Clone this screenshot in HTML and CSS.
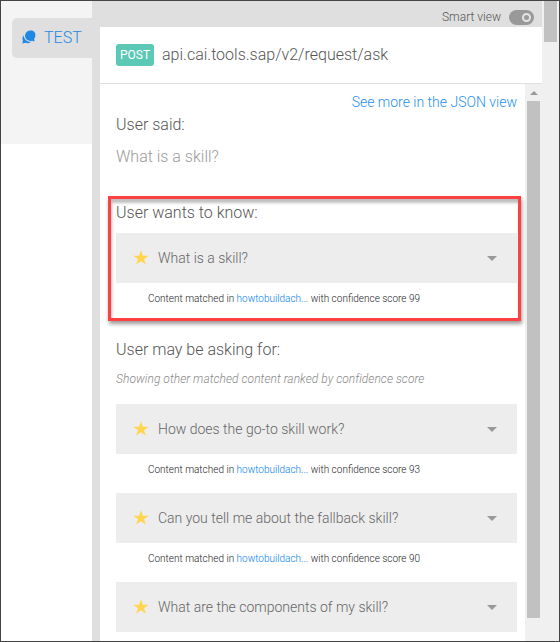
FILE: index.html
```html
<!DOCTYPE html>
<html lang="en">
<head>
<meta charset="utf-8">
<title>Test console</title>
<link rel="stylesheet" href="styles.css">
</head>
<body>
<svg class="defs" width="0" height="0" aria-hidden="true">
  <symbol id="star" viewBox="0 0 16 16"><path d="M8 .3l1.900 5.500h5.700L11 9.200l1.900 5.300L8 11.300l-4.900 3.200L5 9.200.4 5.800h5.700z" fill="#ffd54f"/></symbol>
</svg>
<div class="app">
  <aside class="side">
    <div class="side-bg">
      <div class="tab">
        <svg class="chat" viewBox="0 0 14 14"><path d="M8 .4h2l2 1.200 1.300 2v3.200l-1.100 2 .3 2.800-2.500-.8c-3 1.200-6.400-.8-6.900-4C2.700 3.400 5 .6 8 .4z" fill="#1e88e5"/><path d="M1.600 5.200C.4 7 .2 9 .9 10.400L.4 13.400l3-.7c2.300.8 4.500.5 6-.9-3.700.3-7.300-2-7.800-6.600z" fill="#1e88e5"/><path d="M2.300 5.800c.2 3.200 2.800 5.400 6.400 5.500" fill="none" stroke="#dfdfdf" stroke-width=".6"/></svg>
        <span class="tab-label">TEST</span>
      </div>
    </div>
  </aside>
  <main class="main">
    <div class="topbar"><span class="smart">Smart view</span><span class="toggle"><i class="knob"></i></span></div>
    <section class="panel">
      <header class="request"><span class="method">POST</span><span class="url">api.cai.tools.sap/v2/request/ask</span></header>
      <div class="body">
        <div class="content">
          <a class="more"><span>See more in the JSON view</span></a>
          <h2 class="heading">User said:</h2>
          <p class="said">What is a skill?</p>
          <div class="best">
            <h2 class="heading">User wants to know:</h2>
            <div class="card"><svg class="star"><use href="#star"/></svg><span class="q">What is a skill?</span><i class="caret"></i></div>
            <p class="note">Content matched in <a>howtobuildach...</a> with confidence score 99</p>
            <div class="highlight"></div>
          </div>
          <h2 class="heading">User may be asking for:</h2>
          <p class="sub">Showing other matched content ranked by confidence score</p>
          <div class="card"><svg class="star"><use href="#star"/></svg><span class="q">How does the go-to skill work?</span><i class="caret"></i></div>
          <p class="note">Content matched in <a>howtobuildach...</a> with confidence score 93</p>
          <div class="card"><svg class="star"><use href="#star"/></svg><span class="q">Can you tell me about the fallback skill?</span><i class="caret"></i></div>
          <p class="note">Content matched in <a>howtobuildach...</a> with confidence score 90</p>
          <div class="card"><svg class="star"><use href="#star"/></svg><span class="q">What are the components of my skill?</span><i class="caret"></i></div>
        </div>
        <div class="scroll"><i class="arrow"></i><i class="thumb"></i></div>
      </div>
    </section>
  </main>
  <div class="page-scroll"><i class="page-thumb"></i></div>
</div>
</body>
</html>
```

FILE: styles.css
```css
* { box-sizing: border-box; }
body { margin: 0; font-family: Roboto, "Liberation Sans", sans-serif; font-weight: 300; color: #555; }
h2, p { margin: 0; font-weight: 300; }
.defs { display: block; }
.app { display: flex; width: 560px; height: 642px; border: 1px solid #444; background: #fff; overflow: hidden; }
.side { width: 91px; }
.side-bg { height: 143px; padding: 17px 0 0 11px; background: #f4f4f4; }
.tab { display: flex; align-items: center; height: 40px; padding-left: 10px; border-radius: 5px 0 0 5px; background: #dfdfdf; }
.chat { width: 14px; height: 14px; margin-top: -2px; }
.tab-label { margin-left: 8px; font-size: 16px; line-height: 20px; color: #1e88e5; }
.main { display: flex; flex-direction: column; width: 450px; padding-left: 8px; background: #dfdfdf; }
.topbar { display: flex; align-items: center; justify-content: flex-end; height: 26px; padding: 6px 8px 0 0; }
.smart { font-size: 12px; line-height: 20px; color: #555; }
.toggle { display: flex; align-items: center; justify-content: flex-end; width: 25px; height: 15px; margin-left: 8px; padding-right: 3px; border-radius: 8px; background: #999; }
.knob { width: 9px; height: 9px; border: 2px solid #e4e4e4; border-radius: 50%; }
.panel { display: flex; flex-direction: column; flex: 1; background: #fff; }
.request { display: flex; align-items: center; height: 57px; padding-left: 16px; border-bottom: 1px solid #dfdfdf; }
.method { width: 38px; height: 22px; border-radius: 3px; background: #5cc8b6; color: #fff; font-size: 12px; font-weight: 400; line-height: 22px; text-align: center; }
.url { margin-left: 8px; font-size: 16px; line-height: 24px; }
.body { display: flex; flex: 1; }
.content { width: 425px; padding: 8px 8px 0 16px; }
.more { display: block; height: 21px; font-size: 14px; line-height: 20px; text-align: right; color: #1e90f0; }
.heading { font-size: 16px; line-height: 24px; }
.said { margin-top: 8px; font-size: 16px; line-height: 24px; color: #999; }
.best { position: relative; margin: 32px 0 22px; }
.card { display: flex; align-items: center; height: 50px; padding: 0 20px 0 17px; background: #ededed; color: #666; }
.best .card { margin-top: 8px; }
.star { width: 16px; height: 16px; }
.q { flex: 1; margin-left: 9px; font-size: 14px; line-height: 20px; }
.caret { border: 5px solid transparent; border-top-color: #999; border-bottom: 0; }
.note { height: 32px; padding-left: 32px; font-size: 10px; line-height: 31px; color: #222; }
.note a { color: #0080f0; }
.note + .card { margin-top: 7px; }
.best + .heading { padding-top: 1px; }
.sub { margin: 7px 0 15px; font-size: 12px; font-style: italic; line-height: 20px; letter-spacing: .045px; color: #888; }
.highlight { position: absolute; left: -8px; top: -5px; width: 413px; height: 125px; border: 3px solid #ff4040; box-shadow: 1px 3px 4px rgba(0,0,0,.4), inset 1px 4px 3px rgba(0,0,0,.25); }
.scroll { display: flex; flex-direction: column; align-items: center; width: 17px; background: #f0f0f0; }
.arrow { margin-top: 7px; border: 4px solid transparent; border-bottom-color: #999; border-top: 0; }
.thumb { width: 13px; height: 517px; margin-top: 6px; background: #c1c1c1; }
.page-scroll { width: 17px; padding-left: 2px; background: #f0f0f0; }
.page-thumb { display: block; width: 13px; height: 41px; background: #c1c1c1; }
```
